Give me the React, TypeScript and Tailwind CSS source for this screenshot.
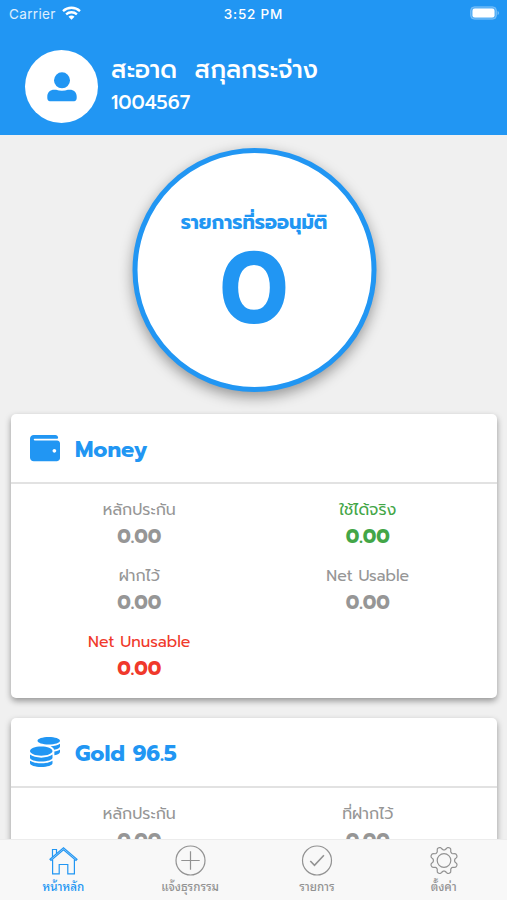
import clsx from "clsx";
import type { ReactNode } from "react";
import { FaCoins, FaWallet } from "react-icons/fa";

type Entry = {
  label: string;
  value: string;
  tone?: "green" | "red";
};

const moneyEntries: Entry[] = [
  { label: "หลักประกัน", value: "0.00" },
  { label: "ใช้ได้จริง", value: "0.00", tone: "green" },
  { label: "ฝากไว้", value: "0.00" },
  { label: "Net Usable", value: "0.00" },
  { label: "Net Unusable", value: "0.00", tone: "red" },
];

const goldEntries: Entry[] = [
  { label: "หลักประกัน", value: "0.00" },
  { label: "ที่ฝากไว้", value: "0.00" },
];

function StatusBar() {
  return (
    <div className="grid h-7 grid-cols-3 items-center px-[9px] font-['Inter','Liberation_Sans',sans-serif] text-[13px] leading-7">
      <div className="flex items-center gap-[6px]">
        <span className="text-[13.5px] tracking-[0.35px] text-white/85">Carrier</span>
        <svg className="-mt-[2px] h-[14px] w-[19px]" viewBox="0 0 19 14" fill="none" stroke="currentColor">
          <path d="M1 5.2C5.8.6 13.2.6 18 5.2" strokeWidth="2.3" />
          <path d="M4.1 8.4c3-2.9 7.8-2.9 10.8 0" strokeWidth="2.3" />
          <path d="M6.5 10.7c1.7-1.6 4.3-1.6 6 0l-3 3z" fill="currentColor" stroke="none" />
        </svg>
      </div>
      <span className="text-center text-[13.5px] font-medium tracking-[0.8px] whitespace-nowrap">3:52 PM</span>
      <svg className="-mt-[2px] -mr-[1px] h-[14px] w-[30px] justify-self-end" viewBox="0 0 30 14">
        <rect x="1.500" y=".7" width="26" height="12.6" rx="4" fill="white" fillOpacity=".25" stroke="white" strokeOpacity=".25" strokeWidth="1" />
        <rect x="3.500" y="2.5" width="22" height="9" rx="2.3" fill="white" />
        <path d="M28.6 5c1.600.6 1.600 3.400 0 4z" fill="white" fillOpacity=".45" />
      </svg>
    </div>
  );
}

function Header() {
  return (
    <header className="h-[135px] shrink-0 bg-[#2196f3] text-white">
      <StatusBar />
      <div className="flex pt-[22px] pl-[25px]">
        <div className="flex size-[73px] shrink-0 items-center justify-center rounded-full bg-white text-[#2196f3]">
          <svg className="size-[30px]" viewBox="0 0 30 30" fill="currentColor">
            <circle cx="15" cy="8.300" r="8" />
            <path d="M.3 26v-1.500c0-4 3-6.700 6.800-6.700h2c3.400 1.300 8.400 1.300 11.800 0h2c3.800 0 6.800 2.700 6.800 6.700V26c0 2-1 3.200-2.600 3.200H2.900C1.300 29.200.3 28 .3 26z" />
          </svg>
        </div>
        <div className="ml-[13px] pt-[3px]">
          <p className="h-[33px] text-[24.4px] leading-[33px] font-medium whitespace-pre">{"สะอาด  สกุลกระจ่าง"}</p>
          <p className="h-[33px] text-[19.4px] leading-[33px] font-medium">1004567</p>
        </div>
      </div>
    </header>
  );
}

function PendingCircle() {
  return (
    <div className="mx-auto mt-[13px] flex size-[244px] shrink-0 translate-x-[0.5px] flex-col items-center rounded-full border-[5px] border-[#2196f3] bg-white pt-[56px] text-[#2196f3] shadow-[0_5px_14px_rgba(0,0,0,0.38)]">
      <p className="h-[28px] text-[19.4px] leading-[28px] font-bold whitespace-nowrap">รายการที่รออนุมัติ</p>
      <p className="mt-[3px] h-[98px] text-[101px] leading-[98px] font-semibold">0</p>
    </div>
  );
}

function AccountCard({
  title,
  icon,
  entries,
  className,
}: {
  title: string;
  icon: ReactNode;
  entries: Entry[];
  className?: string;
}) {
  return (
    <section
      className={clsx(
        "mr-[10px] ml-[11px] shrink-0 rounded-[5px] bg-white shadow-[0_3px_6px_rgba(0,0,0,0.38)]",
        className,
      )}
    >
      <div className="flex h-[70px] items-center border-b-2 border-[#e2e2e2] pl-[19px] text-[#2196f3]">
        {icon}
        <h2 className="mt-[3px] ml-[15px] text-[22px] font-bold">{title}</h2>
      </div>
      <div className="grid grid-cols-2 px-[14px] pt-[13px] pr-[15px] text-center">
        {entries.map((entry, i) => (
          <div
            key={i}
            className={clsx(
              "h-[66px]",
              entry.tone === "green" && "text-[#43a647]",
              entry.tone === "red" && "text-[#f0392b]",
              !entry.tone && "text-[#969696]",
            )}
          >
            <p className="h-[26px] text-[15.8px] leading-[26px]">{entry.label}</p>
            <p className="h-[26px] text-[19.5px] leading-[28px] font-bold">{entry.value}</p>
          </div>
        ))}
      </div>
    </section>
  );
}

function HomeIcon() {
  return (
    <svg className="size-8" viewBox="0 0 32 32" fill="none" stroke="currentColor" strokeWidth="1.200">
      <path d="M3 14.300 16.500 2.700 30 14.300l-1 1.200L16.500 4.900 4 15.500z" />
      <path d="M5.500 12V4.500h4v4M5.600 14.500v14.300h6.600V19.500h8.600v9.300h6.600V14.500" />
    </svg>
  );
}

function AddIcon() {
  return (
    <svg className="size-8" viewBox="0 0 32 32" fill="none" stroke="currentColor" strokeWidth="1.200">
      <circle cx="16.500" cy="15.500" r="14.500" />
      <path d="M16.500 6.300v18.400M7.300 15.500h18.400" />
    </svg>
  );
}

function CheckIcon() {
  return (
    <svg className="size-8" viewBox="0 0 32 32" fill="none" stroke="currentColor" strokeWidth="1.200">
      <circle cx="16" cy="15.500" r="14.500" />
      <path d="m9.300 16 4.200 4.300 9.400-10" strokeWidth="1.600" />
    </svg>
  );
}

function GearIcon() {
  // eight teeth around the hub
  const points = Array.from({ length: 96 }, (_, i) => {
    const a = (i / 96) * Math.PI * 2;
    const wave = Math.cos(a * 8 + Math.PI);
    const r = 12.2 + 1.7 * Math.tanh(wave * 1.6);
    return `${(16 + r * Math.cos(a)).toFixed(2)},${(15.5 + r * Math.sin(a)).toFixed(2)}`;
  }).join(" ");

  return (
    <svg className="size-8" viewBox="0 0 32 32" fill="none" stroke="currentColor" strokeWidth="1.200" strokeLinejoin="round">
      <polygon points={points} />
      <circle cx="16" cy="15.500" r="6.800" />
    </svg>
  );
}

const tabs = [
  { label: "หน้าหลัก", icon: <HomeIcon />, active: true },
  { label: "แจ้งธุรกรรม", icon: <AddIcon /> },
  { label: "รายการ", icon: <CheckIcon /> },
  { label: "ตั้งค่า", icon: <GearIcon /> },
];

function TabBar() {
  return (
    <nav className="grid h-[61px] shrink-0 grid-cols-4 border-t border-[#ececec] bg-[#f8f8f8] pt-[5px] font-['Thonburi','Noto_Sans_Thai_Looped','Sarabun','Loma','Waree','Noto_Serif_Thai','Noto_Sans',sans-serif]">
      {tabs.map((tab) => (
        <div
          key={tab.label}
          className={clsx("flex flex-col items-center", tab.active ? "text-[#2196f3]" : "text-[#929292]")}
        >
          {tab.icon}
          <span className="h-5 text-[11.6px] leading-[18px] font-medium whitespace-nowrap">{tab.label}</span>
        </div>
      ))}
    </nav>
  );
}

export default function App() {
  return (
    <div className="flex h-[900px] w-full flex-col overflow-hidden bg-[#f0f0f0] font-['Prompt','Noto_Sans','Noto_Sans_Thai',sans-serif]">
      <Header />
      <main className="flex min-h-0 flex-1 flex-col overflow-hidden">
        <PendingCircle />
        <AccountCard
          title="Money"
          icon={<FaWallet className="size-[30px]" />}
          entries={moneyEntries}
          className="mt-[22px] h-[284px]"
        />
        <AccountCard
          title="Gold 96.5"
          icon={<FaCoins className="size-[30px]" />}
          entries={goldEntries}
          className="mt-5 h-[284px]"
        />
      </main>
      <TabBar />
    </div>
  );
}
